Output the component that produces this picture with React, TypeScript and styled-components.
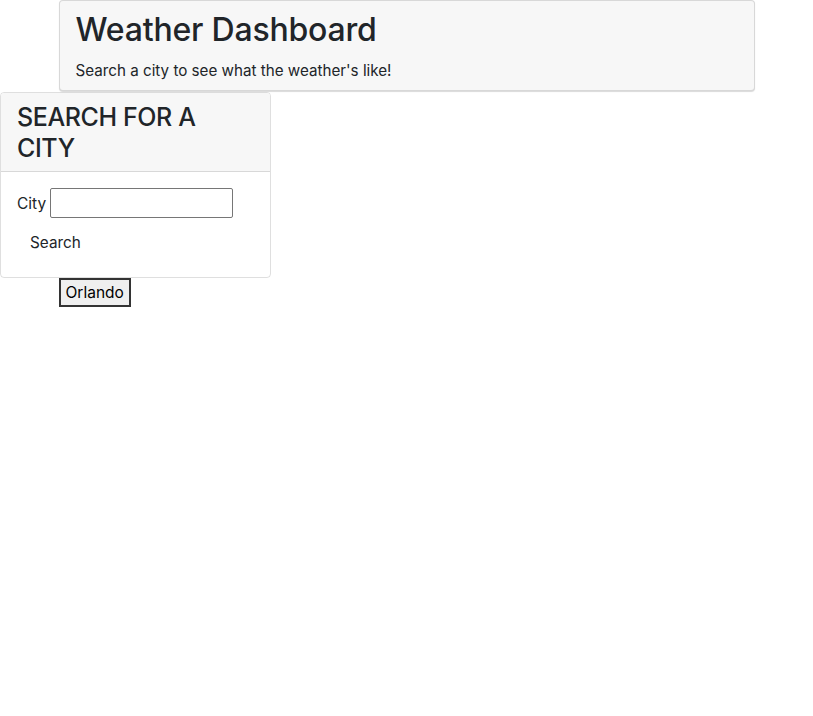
import React from "react";
import styled, { createGlobalStyle } from "styled-components";

const Global = createGlobalStyle`
  * { box-sizing: border-box; }
  body {
    margin: 0;
    font-family: Inter, "Liberation Sans", Arial, sans-serif;
    font-size: 15.5px;
    line-height: 1.5;
    color: #212529;
    background: #fff;
  }
`;

const Container = styled.div`
  width: 720px;
  margin: 0 auto;
  padding: 0 12px;
`;

const Hero = styled.header`
  background: #f7f7f7;
  border: 1px solid rgba(0, 0, 0, 0.125);
  border-radius: 4px;
  box-shadow: 0 1px 1px rgba(0, 0, 0, 0.15);
  padding: 8px 16px 7px;
`;

const Title = styled.h1`
  margin: 0 0 9px;
  font-size: 32px;
  font-weight: 500;
  line-height: 41px;
  letter-spacing: -0.2px;
`;

const Lead = styled.p`
  margin: 0;
  font-size: 15.2px;
  line-height: 24px;
`;

const Card = styled.section`
  width: 271px;
  margin-top: 1px;
  border: 1px solid rgba(0, 0, 0, 0.125);
  border-radius: 4px;
  overflow: hidden;
`;

const CardHeader = styled.div`
  background: #f7f7f7;
  border-bottom: 1px solid rgba(0, 0, 0, 0.125);
  padding: 9px 16px 7px;
`;

const CardTitle = styled.h2`
  margin: 0;
  font-size: 25px;
  font-weight: 500;
  line-height: 31px;
  letter-spacing: -0.4px;
`;

const CardBody = styled.form`
  padding: 16px 16px 15px;
  display: flex;
  flex-direction: column;
  align-items: flex-start;
`;

const Field = styled.div`
  display: flex;
  align-items: center;
  gap: 4px;
`;

const Label = styled.label`
  font-size: 15.5px;
  padding-top: 2px;
`;

const Input = styled.input`
  width: 183px;
  height: 30px;
  border: 1px solid #767676;
  border-radius: 2px;
  font-size: 16px;
`;

const PlainButton = styled.button`
  margin-top: 6px;
  border: none;
  background: transparent;
  font-family: inherit;
  font-size: 15.3px;
  line-height: 24px;
  color: #212529;
  padding: 7px 13px;
`;

const HistoryButton = styled.button`
  margin-top: 0;
  font-family: inherit;
  font-size: 15.5px;
  line-height: 24px;
  color: #000;
  background: #efefef;
  border: 2px solid #333;
  padding: 1px 5px 0;
`;

export default function App() {
  return (
    <>
      <Global />
      <Container>
        <Hero>
          <Title>Weather Dashboard</Title>
          <Lead>Search a city to see what the weather's like!</Lead>
        </Hero>
      </Container>
      <Card>
        <CardHeader>
          <CardTitle>SEARCH FOR A CITY</CardTitle>
        </CardHeader>
        <CardBody onSubmit={(e) => e.preventDefault()}>
          <Field>
            <Label htmlFor="city">City</Label>
            <Input id="city" type="text" />
          </Field>
          <PlainButton type="submit">Search</PlainButton>
        </CardBody>
      </Card>
      <Container>
        <HistoryButton>Orlando</HistoryButton>
      </Container>
    </>
  );
}
